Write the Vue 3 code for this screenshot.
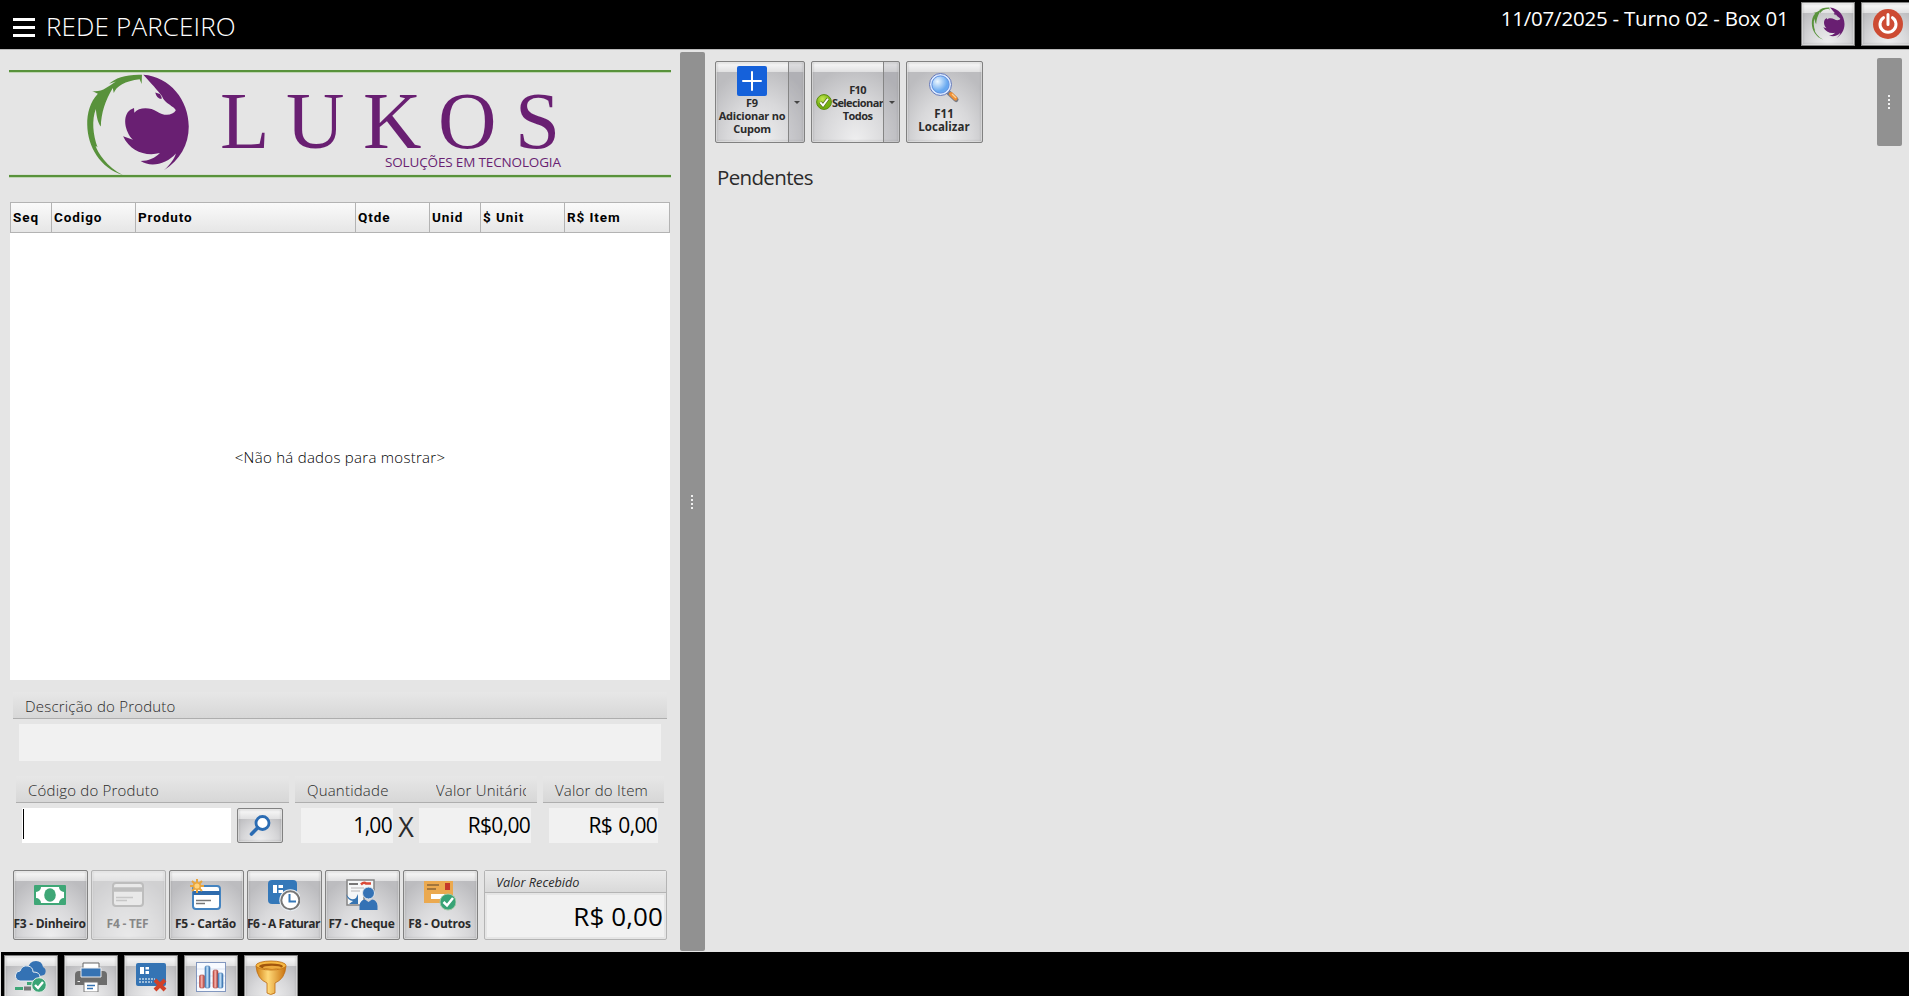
<script setup>
const columns = [
  { label: 'Seq', width: 41 },
  { label: 'Codigo', width: 84 },
  { label: 'Produto', width: 220 },
  { label: 'Qtde', width: 74 },
  { label: 'Unid', width: 51 },
  { label: '$ Unit', width: 84 },
  { label: 'R$ Item', width: 104 }
]
</script>

<template>
  <div class="app">
    <svg class="defs" aria-hidden="true">
      <defs>
        <symbol id="fox" viewBox="45 40 315 309">
          <path fill="#58923b" d="M216 44C170 42 135 54 117 71L137 64C114 79 96 97 66 93L83 101C60 125 50 160 51 195C52 260 90 325 158 346C110 322 82 278 76 258L82 262C68 225 64 180 77 147C79 172 84 190 92 200C93 160 105 122 128 84L131 99C138 78 165 62 209 57L215 72Z" />
          <path fill="#691f72" fill-rule="evenodd" d="M220 44C300 50 357 120 357 200C357 255 330 302 282 332C304 311 315 295 318 281C292 312 244 325 212 304C236 304 256 295 270 280C226 291 180 274 159 229L189 240C163 214 156 166 181 149L192 144L193 158C206 141 240 140 262 155C280 168 309 168 318 151C315 140 284 131 276 108C266 94 240 66 220 44ZM256 97L270 102Q277 111 275 117Q260 116 256 97Z" />
        </symbol>
        <linearGradient id="gold" x1="0" x2="1"><stop offset="0" stop-color="#d07e12" /><stop offset=".4" stop-color="#ffd978" /><stop offset="1" stop-color="#c8700c" /></linearGradient>
        <linearGradient id="red" x1="0" x2="1"><stop offset="0" stop-color="#c23c34" /><stop offset=".45" stop-color="#f5b5ae" /><stop offset="1" stop-color="#a82c25" /></linearGradient>
        <linearGradient id="blue" x1="0" x2="1"><stop offset="0" stop-color="#3579bd" /><stop offset=".45" stop-color="#c4e3fa" /><stop offset="1" stop-color="#2b67a9" /></linearGradient>
        <radialGradient id="lens" cx=".35" cy=".35"><stop offset="0" stop-color="#eef8ff" /><stop offset="1" stop-color="#68a9f0" /></radialGradient>
        <radialGradient id="lime" cx=".4" cy=".3"><stop offset="0" stop-color="#c4e84e" /><stop offset="1" stop-color="#73b010" /></radialGradient>
      </defs>
    </svg>

    <header class="topbar">
      <div class="burger"><i></i><i></i><i></i></div>
      <h1>REDE PARCEIRO</h1>
      <div class="session">11/07/2025 - Turno 02 - Box 01</div>
      <button class="btn small"><svg class="foxmini" width="34" height="33"><use href="#fox" /></svg></button>
      <button class="btn small power">
        <svg width="30" height="30" viewBox="0 0 30 30"><circle cx="15" cy="15" r="15" fill="#cd4b33" /><path d="M10.5 8.7A8 8 0 1 0 19.5 8.7M15 5.5V15.5" fill="none" stroke="#fff" stroke-width="3" stroke-linecap="round" /></svg>
      </button>
    </header>

    <main class="body">
      <section class="sale">
        <svg class="brand" width="662" height="108" viewBox="9 70 662 108">
          <path d="M9 71.2H671M9 176.2H671" stroke="#b3cfa4" stroke-width="3" />
          <path d="M9 71H671M9 176H671" stroke="#58923b" stroke-width="2" />
          <use href="#fox" x="85" y="73.5" width="105" height="102.5" />
          <text class="lukos" y="148" x="220 286 363 438 515">LUKOS</text>
          <text class="tag" x="385" y="166.500" textLength="176">SOLUÇÕES EM TECNOLOGIA</text>
        </svg>

        <div class="grid">
          <div class="ghead">
            <div v-for="c in columns" :key="c.label" class="gcol" :style="{ width: c.width + 'px' }">{{ c.label }}</div>
          </div>
          <div class="gempty"><span>&lt;Não há dados para mostrar&gt;</span></div>
        </div>

        <div class="group desc">
          <div class="caption"><span class="t-desc">Descrição do Produto</span></div>
          <div class="field"></div>
        </div>

        <div class="entry">
          <div class="group code">
            <div class="caption"><span class="t-code">Código do Produto</span></div>
            <div class="line">
              <div class="input"><i></i></div>
              <button class="btn find"><svg width="22" height="22" viewBox="0 0 22 22"><circle cx="13.5" cy="8" r="6.5" fill="#fff" stroke="#2b6cb3" stroke-width="2.8" /><path d="M8.7 12.8L2.5 19" stroke="#2b6cb3" stroke-width="3.6" stroke-linecap="round" /></svg></button>
            </div>
          </div>
          <div class="group qty">
            <div class="caption two"><span class="t-qty">Quantidade</span><span class="clip t-unit">Valor Unitário</span></div>
            <div class="line">
              <div class="value q">1,00</div><div class="times">X</div><div class="value u">R$0,00</div>
            </div>
          </div>
          <div class="group item">
            <div class="caption"><span class="t-item">Valor do Item</span></div>
            <div class="line"><div class="value total">R$ 0,00</div></div>
          </div>
        </div>

        <div class="payments">
          <button class="btn pay">
            <svg width="32" height="32" viewBox="0 0 32 32"><rect y="6" width="32" height="20" rx="1" fill="#3fa777" /><path d="M7 8H25A5 5 0 0 0 30 13V19A5 5 0 0 0 25 24H7A5 5 0 0 0 2 19V13A5 5 0 0 0 7 8Z" fill="#fff" /><ellipse cx="16" cy="16" rx="5.8" ry="6.8" fill="#3fa777" /></svg>
            <span class="p3">F3 - Dinheiro</span>
          </button>
          <button class="btn pay off">
            <svg width="32" height="32" viewBox="0 0 32 32"><rect x="1" y="4" width="30" height="23" rx="3" fill="#eee" stroke="#969696" stroke-width="2" /><path d="M1 10.5H31" stroke="#999" stroke-width="4.5" /><path d="M4 18.5H21M4 21.5H15" stroke="#aaa" stroke-width="1.7" /></svg>
            <span class="p4">F4 - TEF</span>
          </button>
          <button class="btn pay">
            <svg width="32" height="32" viewBox="0 0 32 32"><rect x="3" y="7" width="27" height="23" rx="3" fill="#fff" stroke="#4584c0" stroke-width="2" /><path d="M3 14H30" stroke="#2e6bad" stroke-width="4" /><path d="M6 21.5H21M6 24.5H15" stroke="#777" stroke-width="1.3" /><path d="M7 0V14M0 7H14M2 2L12 12M12 2L2 12" stroke="#e9a53d" stroke-width="2" /><circle cx="7" cy="7" r="3.3" fill="#ffd37c" stroke="#e9a53d" stroke-width="1.5" /></svg>
            <span class="p5">F5 - Cartão</span>
          </button>
          <button class="btn pay">
            <svg width="32" height="32" viewBox="0 0 32 32"><rect y="1" width="29" height="24" rx="4" fill="#3478b9" /><path d="M5 6H9V14H5ZM10.5 6H15V9H10.5ZM10.5 11H15V14H10.5Z" fill="#fff" /><circle cx="22.3" cy="21.3" r="11" fill="#e7edf2" /><circle cx="22.3" cy="21.3" r="9" fill="#fff" stroke="#777" stroke-width="2" /><path d="M21.5 15V22.5H28" fill="none" stroke="#3478b9" stroke-width="2" /></svg>
            <span class="p6">F6 - A Faturar</span>
          </button>
          <button class="btn pay">
            <svg width="32" height="32" viewBox="0 0 32 32"><path d="M1 1H28V14H18V26H1Z" fill="#f5f7f8" stroke="#858585" stroke-width="1.5" /><path d="M3 5H12" stroke="#777" stroke-width="2" /><path d="M15 5.5Q18 2.5 20 4.5H25" fill="none" stroke="#da4937" stroke-width="2.5" /><path d="M5 9H18M5 12H14" stroke="#ccc" stroke-width="1.4" /><path d="M0 15Q5 23 10 19L12 15V25H3L7 22Q2 22 0 15Z" fill="#3574b2" /><circle cx="22.5" cy="14" r="6" fill="#3472b5" stroke="#e1e7ed" /><path d="M13.5 31V27Q14 21 19 20.5L22.5 23L26 20.5Q31 21 31.5 27V31Z" fill="#3472b5" /></svg>
            <span class="p7">F7 - Cheque</span>
          </button>
          <button class="btn pay">
            <svg width="32" height="32" viewBox="0 0 32 32"><rect y="2" width="29" height="22" fill="#eba94f" /><rect x="21" y="4" width="5" height="7" fill="#c5372a" /><path d="M3 6H15M3 10H12" stroke="#8c6537" stroke-width="1.4" /><rect x="7" y="15" width="14" height="5" fill="#fff" /><circle cx="24" cy="23" r="8" fill="#38a376" stroke="#a1c9a4" /><path d="M19.5 23L23 26.5L29 19" fill="none" stroke="#fff" stroke-width="2.5" /></svg>
            <span class="p8">F8 - Outros</span>
          </button>
          <div class="received">
            <div class="rhead"><span>Valor Recebido</span></div>
            <div class="rval"><span>R$ 0,00</span></div>
          </div>
        </div>
      </section>

      <div class="splitter"><div class="dots"><i></i><i></i><i></i><i></i></div></div>

      <section class="pending">
        <div class="tools">
          <button class="btn tool split f9">
            <div class="face">
              <svg width="30" height="30" viewBox="0 0 30 30"><rect width="30" height="30" rx="2" fill="#1561da" /><path d="M15 6V24M6 15H24" stroke="#fff" stroke-width="2" stroke-linecap="round" /></svg>
              <span class="lbl">F9<br>Adicionar no<br>Cupom</span>
            </div>
            <div class="drop"><i></i></div>
          </button>
          <button class="btn tool split f10">
            <div class="face">
              <svg width="16" height="16" viewBox="0 0 16 16"><circle cx="8" cy="8" r="7.4" fill="url(#lime)" stroke="#5b8b12" /><path d="M4.3 8.3L7 11.4L12 4.8" fill="none" stroke="#576c22" stroke-width="3.4" /><path d="M4.3 8.3L7 11.4L12 4.8" fill="none" stroke="#fff" stroke-width="1.9" /></svg>
              <span class="lbl">F10<br>Selecionar<br>Todos</span>
            </div>
            <div class="drop"><i></i></div>
          </button>
          <button class="btn tool f11">
            <svg width="32" height="32" viewBox="0 0 32 32"><path d="M20 20L28 27.5" stroke="#777b85" stroke-width="5" stroke-linecap="round" /><path d="M23 22L27.5 26.5" stroke="#ef8f35" stroke-width="4" stroke-linecap="round" /><path d="M24 22L28 26" stroke="#ffd193" stroke-width="1.3" /><circle cx="12.5" cy="12.5" r="9.8" fill="url(#lens)" stroke="#dceaff" stroke-width="2.5" /><circle cx="12.5" cy="12.5" r="11" fill="none" stroke="#6578b8" /><circle cx="12.5" cy="12.5" r="8.6" fill="none" stroke="#5b8ee0" /></svg>
            <span class="lbl">F11<br>Localizar</span>
          </button>
        </div>
        <h2>Pendentes</h2>
      </section>

      <aside class="side"><div class="dots"><i></i><i></i><i></i><i></i></div></aside>
    </main>

    <footer class="bottombar">
      <button class="btn small">
        <svg width="32" height="32" viewBox="0 0 32 32"><path d="M13 9Q14 1 21 1Q27 1 28 7Q32 9 30 14Q28 16 22 16L15 12Z" fill="#3472b4" /><path d="M5 21Q0 20 .5 15Q1 11 5 11Q7 5 13 6Q18 7 18 12Q25 12 25 17Q25 21 21 21Z" fill="#3472b4" stroke="#e5ebf0" /><path d="M0 28.5H8" stroke="#3fa777" stroke-width="3" /><path d="M9 28.500H16" stroke="#777" stroke-width="4" /><path d="M12 23.500H17" stroke="#3fa777" stroke-width="3" /><circle cx="24" cy="25" r="7.3" fill="#3ba476" stroke="#e8eee9" /><path d="M20 25L23 28L28 22" fill="none" stroke="#fff" stroke-width="2.4" /></svg>
      </button>
      <button class="btn small">
        <svg width="32" height="32" viewBox="0 0 32 32"><path d="M0 15Q0 11 4 11H28Q32 11 32 15V25H0Z" fill="#6d6d6d" /><path d="M8 11V3H24V11" fill="#fff" stroke="#666" /><path d="M6 8H26V17H6Z" fill="#3673b3" stroke="#eee" /><path d="M9 22H23V32H9Z" fill="#fff" stroke="#777" /><path d="M12 25.500H20M12 28.500H18" stroke="#3673b3" stroke-width="1.4" /><path d="M2.500 21.500H5" stroke="#eee" /></svg>
      </button>
      <button class="btn small">
        <svg width="32" height="32" viewBox="0 0 32 32"><rect x="1" y="3" width="30" height="23" rx="2" fill="#3574b4" /><path d="M5 7H9V14H5ZM10.5 7H14V9.5H10.5ZM10.5 11H14V14H10.5Z" fill="#fff" /><path d="M4 19H20M4 22H17" stroke="#c0d5e8" stroke-width="1.4" stroke-dasharray="2 1" /><path d="M20 20L30 30M30 20L20 30" stroke="#d14128" stroke-width="4" /></svg>
      </button>
      <button class="btn small">
        <svg width="32" height="32" viewBox="0 0 32 32"><rect x="1.5" y="2.5" width="29" height="29" fill="#f7faff" stroke="#8297bf" /><path d="M2 9H30M2 16H30M2 23H30" stroke="#dbe4f3" /><rect x="4.5" y="15" width="5" height="13" rx="1.5" fill="url(#red)" stroke="#aa4a45" stroke-width=".6" /><rect x="10" y="6" width="5" height="22" rx="1.5" fill="url(#blue)" stroke="#4579b0" stroke-width=".6" /><rect x="18" y="10" width="5" height="18" rx="1.5" fill="url(#red)" stroke="#aa4a45" stroke-width=".6" /><rect x="23" y="13" width="5" height="15" rx="1.5" fill="url(#blue)" stroke="#4579b0" stroke-width=".6" /></svg>
      </button>
      <button class="btn small">
        <svg width="32" height="36" viewBox="0 0 32 36"><path d="M1 6Q2 19 12 23V33Q15.5 36 20 33V23Q30 19 31 6Z" fill="url(#gold)" stroke="#bd6b10" stroke-width=".8" /><ellipse cx="16" cy="5.5" rx="15" ry="4.5" fill="#f6b843" stroke="#bd6b10" stroke-width=".8" /><ellipse cx="16" cy="6.3" rx="12" ry="2.9" fill="#a2560c" /><ellipse cx="17" cy="7.4" rx="9" ry="1.7" fill="#edaa3e" /></svg>
      </button>
    </footer>
  </div>
</template>

<style>
body { margin: 0; overflow: hidden; }
</style>

<style scoped>
* { box-sizing: border-box; }
.app { width: 1909px; height: 996px; overflow: hidden; display: flex; flex-direction: column; background: #e5e5e5; font-family: "Open Sans", "Noto Sans", sans-serif; color: #2b2b2b; }
.defs { position: absolute; width: 0; height: 0; }
svg { display: block; flex: none; }
span { white-space: nowrap; }
h1, h2 { margin: 0; font-weight: 400; }

.btn { position: relative; flex: none; margin: 0; padding: 0; border: 1px solid #818181; border-radius: 2px; font: inherit; color: #2b2b2b; overflow: hidden;
  background: linear-gradient(#fbfbfb, #e0e0e1) 0 0 / 100% 10px no-repeat, radial-gradient(ellipse 68% 95% at 50% 100%, #efeff0, #d8d8da 55%, #bcbcbf 100%);
  box-shadow: inset 0 0 0 1px #ffffff70, inset 0 0 3px #8c8c8c; }
.btn.small { width: 54px; height: 44px; display: flex; justify-content: center; border-radius: 0; }

.topbar { height: 49px; flex: none; background: #000; color: #fff; display: flex; align-items: flex-start; }
.burger { width: 22px; margin: 18px 11px 0 13px; display: flex; flex-direction: column; gap: 5px; }
.burger i { height: 3px; background: #fff; }
h1 { font-size: 26px; line-height: 36px; margin-top: 8px; font-weight: 300; letter-spacing: 0.15px; }
.session { margin: 4px 12.5px 0 auto; font-size: 20.5px; line-height: 28px; letter-spacing: -0.22px; }
.topbar .btn { margin-top: 2px; margin-right: 6px; }
.topbar .power { margin-right: -6px; }
.foxmini { margin-top: 4px; }
.power svg { margin-top: 6px; }

.body { height: 903px; flex: none; display: flex; border-top: 1px solid #b9b9b9; }
.sale { width: 680px; flex: none; }
.brand { margin: 20px 0 0 9px; }
.lukos { font: 81px "Liberation Serif", serif; fill: #691f72; }
.tag { font: 13.5px "Open Sans", sans-serif; fill: #691f72; }

.grid { width: 660px; height: 478px; margin: 24px 0 0 10px; background: #fff; }
.ghead { height: 31px; display: flex; border: 1px solid #b3b3b3; background: linear-gradient(#fafafa, #e6e6e6); }
.gcol { flex: none; border-right: 1px solid #b3b3b3; padding: 4px 0 0 2px; font: bold 13.5px/20px Roboto, sans-serif; letter-spacing: 0.9px; color: #000; }
.gcol:last-child { border-right: 0; }
.gempty { height: 447px; display: flex; align-items: center; justify-content: center; color: #000; font-size: 15px; }
.gempty span { font-weight: 300; letter-spacing: 0.28px; }

.caption { height: 27px; background: linear-gradient(#e7e7e7, #d7d7d7); border-bottom: 1px solid #aeaeae; display: flex; padding-left: 12px; font-size: 15px; line-height: 28px; font-weight: 300; letter-spacing: 0.2px; }
.desc { width: 654px; margin: 12px 0 0 13px; }
.field { margin: 5px 6px 0; height: 37px; background: #f1f1f1; }
.entry { display: flex; gap: 6px; margin: 15px 0 0 16px; }
.code { width: 273px; }
.qty { width: 242px; }
.item { width: 121px; }
.line { display: flex; padding: 5px 6px 0; }
.input { width: 209px; height: 35px; background: #fff; padding: 1px; }
.input i { display: block; width: 1px; height: 30px; background: #000; }
.find { width: 46px; height: 35px; margin-left: 6px; display: flex; justify-content: center; padding-top: 6px; }
.t-qty { width: 129px; }
.clip { width: 90px; overflow: hidden; }
.value { flex: 1; height: 35px; background: #f1f1f1; color: #000; text-align: right; font-size: 21px; line-height: 35px; letter-spacing: -0.7px; padding-right: 1px; }
.value.q { flex: none; width: 92px; }
.value.total { word-spacing: 1.5px; }
.times { width: 26px; text-align: center; font-size: 27px; line-height: 38px; font-weight: 400; height: 35px; }

.payments { display: flex; gap: 3px; margin: 27px 0 0 13px; }
.pay { width: 75px; height: 70px; display: flex; flex-direction: column; align-items: center; padding: 8px 2px 0 0; }
.pay span { font-size: 12px; line-height: 16px; font-weight: 700; margin-top: 5px; letter-spacing: -0.25px; }
.pay .p6 { letter-spacing: -0.5px; }
.pay.off { opacity: 0.5; }
.received { width: 183px; height: 70px; margin-left: 3px; border: 1px solid #b4b4b4; border-radius: 2px; display: flex; flex-direction: column; }
.rhead { height: 22px; border-bottom: 1px solid #b4b4b4; background: linear-gradient(#eaeaea, #d9d9d9); padding-left: 11px; font: italic 12.7px/22px "Open Sans", sans-serif; }
.rval { flex: 1; margin: 2px; padding-right: 1px; background: #f1f1f1; color: #000; text-align: right; font-size: 26px; line-height: 42px; letter-spacing: 0.1px; }

.splitter { width: 25px; height: 899px; flex: none; margin-top: 2px; padding-right: 1px; background: #919191; border-radius: 2px; display: flex; justify-content: center; align-items: center; }
.dots { display: flex; flex-direction: column; gap: 2px; }
.dots i { width: 2px; height: 2px; background: #f0f0f0; }
.pending { flex: 1; padding: 11px 0 0 10px; }
.tools { display: flex; gap: 6px; }
.tool { height: 82px; font-size: 11.5px; line-height: 13px; font-weight: 700; text-align: center; }
.split { display: flex; }
.f9 { width: 90px; font-size: 11px; letter-spacing: -0.25px; }
.f10 { width: 89px; font-size: 11px; letter-spacing: -0.6px; }
.f11 { width: 77px; display: flex; flex-direction: column; align-items: center; padding: 10px 1px 0 0; }
.f11 .lbl { margin-top: 3px; }
.face { height: 100%; display: flex; align-items: center; overflow: hidden; }
.f9 .face { width: 72px; flex-direction: column; padding-top: 4px; }
.f10 .face { width: 72px; padding-left: 4px; }
.drop { width: 16px; flex: none; height: 100%; border-left: 1px solid #858585; display: flex; align-items: center; justify-content: center; background: #8a8a9038; }
.drop i { border: 3px solid transparent; border-top-color: #444; border-bottom: 0; }
h2 { font-size: 20.5px; line-height: 28px; margin: 20px 0 0 2px; letter-spacing: -0.65px; }
.side { width: 25px; height: 88px; margin: 8px 7px 0 0; padding-right: 1px; background: #919191; border-radius: 2px; display: flex; align-items: center; justify-content: center; }

.bottombar { flex: none; height: 44px; margin-left: 1px; padding: 3px 0 0 3px; background: #000; display: flex; gap: 6px; }
.bottombar svg { margin-top: 4px; }
</style>
